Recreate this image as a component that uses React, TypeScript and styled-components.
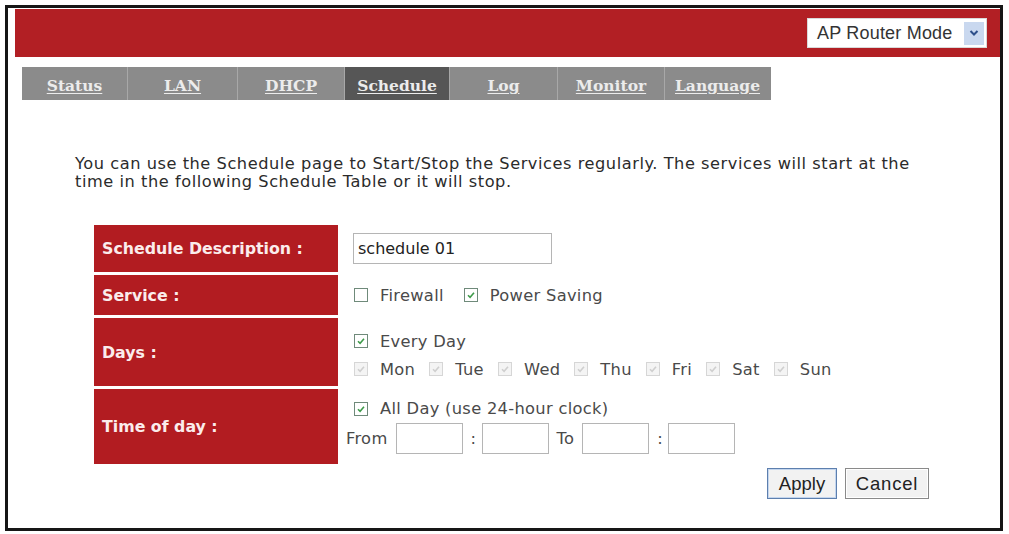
import React from "react";
import styled, { createGlobalStyle } from "styled-components";

const Global = createGlobalStyle`
  html, body { margin: 0; padding: 0; background: #fff; }
  body { font-family: "DejaVu Sans", Verdana, sans-serif; }
`;

const Frame = styled.div`
  box-sizing: border-box;
  margin: 5px 0 0 5px;
  width: 998px;
  height: 526px;
  border: 3px solid #161616;
  padding: 1px 0 0 7px;
  display: flex;
  flex-direction: column;
`;

const Header = styled.div`
  height: 48px;
  background: #b21f24;
  display: flex;
  justify-content: flex-end;
  align-items: center;
  padding-right: 13px;
`;

const Select = styled.div`
  box-sizing: border-box;
  width: 180px;
  height: 30px;
  background: #fff;
  border: 1px solid #d9d9d9;
  display: flex;
  align-items: center;
  justify-content: space-between;
  padding: 0 2px 0 9px;
  font-family: "Liberation Sans", Arial, sans-serif;
  font-size: 18px;
  letter-spacing: 0.2px;
  color: #333;
`;

const Arrow = styled.span`
  width: 20px;
  height: 23px;
  background: #c9d8ef;
  display: flex;
  align-items: center;
  justify-content: center;
`;

const Tabs = styled.div`
  display: flex;
  margin: 10px 0 0 7px;
  height: 33px;
`;

const Tab = styled.div<{ $w: number; $active?: boolean; $last?: boolean }>`
  box-sizing: border-box;
  width: ${(p) => p.$w}px;
  background: ${(p) => (p.$active ? "#565656" : "#8b8b8b")};
  border-right: 1px solid ${(p) => (p.$last ? "#8b8b8b" : "#a8a8a8")};
  display: flex;
  align-items: center;
  justify-content: center;
  padding-top: 4px;
  font-family: "DejaVu Serif", Georgia, serif;
  font-weight: bold;
  font-size: 15.5px;
  color: #ececec;
  text-decoration: underline;
  text-underline-offset: 2px;
`;

const Intro = styled.p`
  margin: 55px 0 0 60px;
  font-size: 16.2px;
  letter-spacing: 0.55px;
  line-height: 18px;
  color: #2b2b2b;
  white-space: nowrap;
`;

const Table = styled.div`
  margin: 34px 0 0 79px;
  width: 838px;
  display: grid;
  grid-template-columns: 244px 1fr;
  grid-template-rows: 47px 40px 68px 75px;
  row-gap: 3px;
`;

const Label = styled.div`
  background: #b21c21;
  color: #fbecec;
  font-weight: bold;
  font-size: 15.8px;
  display: flex;
  align-items: center;
  padding-left: 8px;
`;

const Value = styled.div<{ $top?: number; $gap?: number }>`
  display: flex;
  flex-direction: column;
  justify-content: center;
  gap: ${(p) => p.$gap ?? 10}px;
  padding: ${(p) => p.$top ?? 0}px 0 0 15px;
  font-size: 16.3px;
  color: #4a4a4a;
`;

const Line = styled.div`
  display: flex;
  align-items: center;
  height: 18px;
`;

const TextInput = styled.div<{ $w: number }>`
  box-sizing: border-box;
  width: ${(p) => p.$w}px;
  height: 31px;
  border: 1px solid #b5b5b5;
  background: #fff;
  display: flex;
  align-items: center;
  padding-left: 4px;
  font-size: 16px;
  color: #222;
  flex: none;
`;

const Box = styled.span<{ $dim?: boolean }>`
  box-sizing: border-box;
  width: 14px;
  height: 14px;
  border: 1px solid ${(p) => (p.$dim ? "#d6d6d6" : "#6f8a7a")};
  background: ${(p) => (p.$dim ? "#f4f4f4" : "#fff")};
  display: inline-flex;
  align-items: center;
  justify-content: center;
  margin: 0 12px 0 1px;
  flex: none;
`;

const CbLabel = styled.span<{ $gap?: number }>`
  margin-right: ${(p) => p.$gap ?? 0}px;
  letter-spacing: 0.3px;
`;

const TimeRow = styled.div`
  display: flex;
  align-items: center;
  margin-left: -7px;
  gap: 8px;
  font-size: 16.3px;
  letter-spacing: 0.3px;
`;

const Colon = styled.span`
  width: 3px;
  text-align: center;
`;

const Actions = styled.div`
  grid-column: 1 / span 2;
  display: flex;
  justify-content: flex-end;
  gap: 8px;
  margin-top: 1px;
  padding-right: 3px;
`;

const Button = styled.div<{ $w: number; $primary?: boolean }>`
  box-sizing: border-box;
  width: ${(p) => p.$w}px;
  height: 31px;
  display: flex;
  align-items: center;
  justify-content: center;
  border: 1px solid ${(p) => (p.$primary ? "#5d7fae" : "#8a8a8a")};
  box-shadow: inset 0 0 0 1px ${(p) => (p.$primary ? "#c4d6ee" : "#fff")};
  background: #f2f2f2;
  font-family: "Liberation Sans", Arial, sans-serif;
  font-size: 18.5px;
  letter-spacing: ${(p) => (p.$primary ? 0 : 0.8)}px;
  color: #222;
`;

const Check = ({ dim, on = true }: { dim?: boolean; on?: boolean }) => (
  <Box $dim={dim}>
    {on && (
      <svg width="10" height="10" viewBox="0 0 10 10">
        <path
          d="M2 5.2 L4.1 7.3 L8 2.8"
          fill="none"
          stroke={dim ? "#cfcfcf" : "#3e9b4a"}
          strokeWidth="1.6"
        />
      </svg>
    )}
  </Box>
);

const tabs = [
  { t: "Status", w: 106 },
  { t: "LAN", w: 110 },
  { t: "DHCP", w: 107 },
  { t: "Schedule", w: 105, active: true },
  { t: "Log", w: 108 },
  { t: "Monitor", w: 107 },
  { t: "Language", w: 106 },
];

const days = ["Mon", "Tue", "Wed", "Thu", "Fri", "Sat", "Sun"];

export default function App() {
  return (
    <>
      <Global />
      <Frame>
        <Header>
          <Select>
            <span>AP Router Mode</span>
            <Arrow>
              <svg width="10" height="8" viewBox="0 0 10 8">
                <path d="M1.5 2 L5 5.5 L8.5 2" fill="none" stroke="#2d4f8a" strokeWidth="2" />
              </svg>
            </Arrow>
          </Select>
        </Header>
        <Tabs>
          {tabs.map((x, i) => (
            <Tab key={x.t} $w={x.w} $active={x.active} $last={i === tabs.length - 1}>
              {x.t}
            </Tab>
          ))}
        </Tabs>
        <Intro>
          You can use the Schedule page to Start/Stop the Services regularly. The services will start at the
          <br />
          time in the following Schedule Table or it will stop.
        </Intro>
        <Table>
          <Label>Schedule Description :</Label>
          <Value>
            <TextInput $w={199}>schedule 01</TextInput>
          </Value>
          <Label>Service :</Label>
          <Value>
            <Line>
              <Check on={false} />
              <CbLabel $gap={19}>Firewall</CbLabel>
              <Check />
              <CbLabel>Power Saving</CbLabel>
            </Line>
          </Value>
          <Label>Days :</Label>
          <Value $top={6}>
            <Line>
              <Check />
              <CbLabel>Every Day</CbLabel>
            </Line>
            <Line>
              {days.map((d) => (
                <React.Fragment key={d}>
                  <Check dim />
                  <CbLabel $gap={13}>{d}</CbLabel>
                </React.Fragment>
              ))}
            </Line>
          </Value>
          <Label>Time of day :</Label>
          <Value $gap={5}>
            <Line>
              <Check />
              <CbLabel>All Day (use 24-hour clock)</CbLabel>
            </Line>
            <TimeRow>
              <span>From</span>
              <TextInput $w={67} />
              <Colon>:</Colon>
              <TextInput $w={67} />
              <span>To</span>
              <TextInput $w={67} />
              <Colon>:</Colon>
              <TextInput $w={67} />
            </TimeRow>
          </Value>
          <Actions>
            <Button $w={70} $primary>
              Apply
            </Button>
            <Button $w={84}>Cancel</Button>
          </Actions>
        </Table>
      </Frame>
    </>
  );
}
